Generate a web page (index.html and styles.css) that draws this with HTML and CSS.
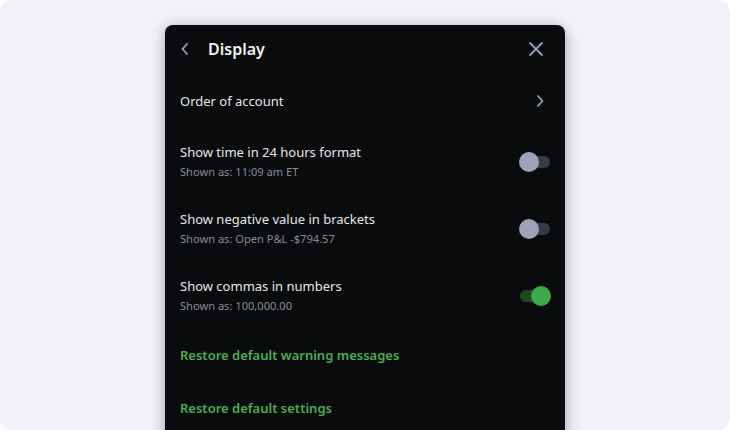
FILE: index.html
```html
<!DOCTYPE html>
<html>
<head>
<meta charset="utf-8">
<link rel="stylesheet" href="styles.css">
</head>
<body>
<div class="stage">
  <div class="card">
    <div class="header">
      <div class="head-left">
        <svg class="back" width="10" height="14" viewBox="0 0 10 14"><path d="M7 2 L2.5 7 L7 12" fill="none" stroke="#9aa0b8" stroke-width="1.8" stroke-linecap="round" stroke-linejoin="round"/></svg>
        <span class="title">Display</span>
      </div>
      <svg class="close" width="16" height="16" viewBox="0 0 16 16"><path d="M2 2 L14 14 M14 2 L2 14" fill="none" stroke="#9aa0b8" stroke-width="1.8" stroke-linecap="round"/></svg>
    </div>
    <div class="row nav">
      <span class="label">Order of account</span>
      <svg width="10" height="14" viewBox="0 0 10 14"><path d="M3 2 L7.5 7 L3 12" fill="none" stroke="#9aa0b8" stroke-width="1.8" stroke-linecap="round" stroke-linejoin="round"/></svg>
    </div>
    <div class="row opt">
      <div class="text">
        <span class="label">Show time in 24 hours format</span>
        <span class="sub">Shown as: 11:09 am ET</span>
      </div>
      <div class="toggle"><div class="knob"></div></div>
    </div>
    <div class="row opt">
      <div class="text">
        <span class="label">Show negative value in brackets</span>
        <span class="sub">Shown as: Open P&amp;L -$794.57</span>
      </div>
      <div class="toggle"><div class="knob"></div></div>
    </div>
    <div class="row opt">
      <div class="text">
        <span class="label">Show commas in numbers</span>
        <span class="sub">Shown as: 100,000.00</span>
      </div>
      <div class="toggle on"><div class="knob"></div></div>
    </div>
    <div class="row link">Restore default warning messages</div>
    <div class="row link">Restore default settings</div>
  </div>
</div>
</body>
</html>
```
FILE: styles.css
```css
* { box-sizing: border-box; }
html, body { margin: 0; padding: 0; background: #ffffff; }
body { width: 730px; height: 430px; overflow: hidden; font-family: "Noto Sans", "Open Sans", sans-serif; }
.stage {
  width: 730px; height: 430px;
  background: #f1f1f7;
  border-radius: 12px;
  padding-top: 25px;
  display: flex; justify-content: center;
  overflow: hidden;
}
.card {
  width: 400px; height: 440px;
  background: #0a0b0d;
  border-radius: 8px;
  box-shadow: 0 3px 14px rgba(0,0,0,0.35);
  padding: 0 15px;
  display: flex; flex-direction: column;
  flex-shrink: 0;
}
.header {
  height: 48px;
  display: flex; align-items: center; justify-content: space-between;
  padding-right: 6px;
}
.head-left { display: flex; align-items: center; gap: 18px; }
.title { color: #f1f2f5; font-size: 16px; font-weight: 600; }
.row { display: flex; align-items: center; justify-content: space-between; }
.nav { height: 55px; padding-right: 5px; }
.label { color: #e6e7ec; font-size: 13px; line-height: 20px; }
.opt { height: 67px; }
.text { display: flex; flex-direction: column; gap: 1px; }
.sub { color: #868b9e; font-size: 11.1px; line-height: 18px; }
.toggle {
  width: 30px; height: 12px; border-radius: 6px;
  background: #363b46;
  position: relative;
}
.knob {
  position: absolute; top: -4px; left: -1px;
  width: 20px; height: 20px; border-radius: 50%;
  background: #9da2b9;
}
.toggle.on { background: #1e4a22; }
.toggle.on .knob { left: auto; right: -1px; background: #3fa847; }
.link { color: #4cae50; font-size: 13px; font-weight: 600; }
.row.link { height: 52px; }
.row.link + .row.link { height: 53px; }
```
